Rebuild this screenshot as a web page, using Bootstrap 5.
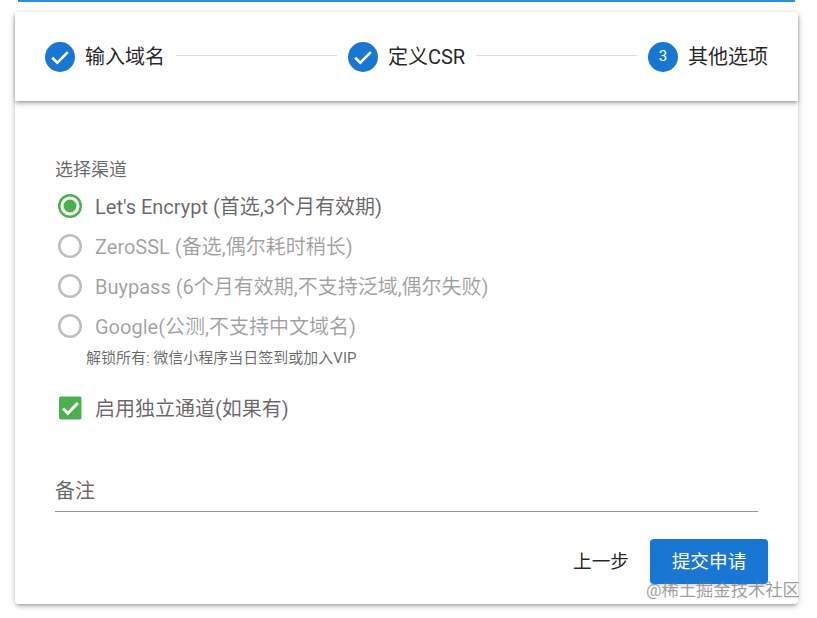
<!DOCTYPE html>
<html lang="zh">
<head>
<meta charset="utf-8">
<title>其他选项</title>
<link href="https://cdn.jsdelivr.net/npm/bootstrap@5.3.0/dist/css/bootstrap.min.css" rel="stylesheet">
<style>
html,body{height:618px;overflow:hidden;background:#fff;}
body{font-family:Roboto,"Noto Sans CJK SC",sans-serif;position:relative;}
.topline{height:2px;margin:0 22px 0 18px;background:#2f8fdc;}
.sheet{margin:10px 19px 0 15px;height:592px;border-radius:4px;background:#fff;box-shadow:0 3px 3px -2px rgba(0,0,0,.2),0 3px 4px 0 rgba(0,0,0,.14),0 1px 8px 0 rgba(0,0,0,.12);display:flex;flex-direction:column;}
.stepbar{height:89px;padding:0 30px;box-shadow:0 2px 4px -1px rgba(0,0,0,.4),0 4px 5px 0 rgba(0,0,0,.1);}
.dot{width:30px;height:30px;border-radius:50%;background:#1976d2;color:#fff;font-size:15px;font-weight:400;flex:none;}
.steplabel{font-size:20px;line-height:30px;color:rgba(0,0,0,.87);margin-left:10px;white-space:nowrap;}
.stepline{flex:1 1 0;height:1px;background:#dcdcdc;margin:-2px 11px 0;}
.formbody{padding:59px 40px 0;flex:1 1 auto;}
.grouplabel{font-size:18px;line-height:20px;color:rgba(0,0,0,.6);margin-bottom:6px;}
.optrow{height:40px;font-size:20px;color:rgba(0,0,0,.6);padding-left:3px;padding-top:1px;}
.optrow.off{color:rgba(0,0,0,.38);}
.optrow svg{flex:none;margin-right:13px;margin-top:-1px;}
.hint{font-size:15px;line-height:20px;color:rgba(0,0,0,.6);padding-left:31px;margin-top:2px;margin-bottom:20px;}
.remark{margin-top:43px;height:41px;border-bottom:1px solid #949494;font-size:20px;line-height:28px;color:rgba(0,0,0,.6);padding-top:6px;}
.actions{padding-top:27px;margin-right:-10px;}
.backbtn{font-size:18.67px;color:rgba(0,0,0,.87);padding:0;margin-right:21px;border:0;background:none;}
.subbtn{width:118px;height:45px;font-size:18.67px;background:#1976d2;border:0;color:#fff;padding:0;border-radius:4px;box-shadow:0 2px 3px rgba(0,0,0,.15);}
.wmark{position:absolute;left:646px;top:578px;font-size:17.3px;line-height:24px;color:rgba(120,120,120,.72);white-space:nowrap;}
</style>
</head>
<body>
<div class="topline"></div>
<div class="sheet">
  <div class="stepbar d-flex align-items-center">
    <div class="dot d-flex align-items-center justify-content-center"><svg width="22" height="22" viewBox="0 0 24 24"><path d="M3.5 12.8l5.6 5.4L20.5 6.6" fill="none" stroke="#fff" stroke-width="2.8"/></svg></div>
    <div class="steplabel">输入域名</div>
    <div class="stepline"></div>
    <div class="dot d-flex align-items-center justify-content-center"><svg width="22" height="22" viewBox="0 0 24 24"><path d="M3.5 12.8l5.6 5.4L20.5 6.6" fill="none" stroke="#fff" stroke-width="2.8"/></svg></div>
    <div class="steplabel">定义CSR</div>
    <div class="stepline"></div>
    <div class="dot d-flex align-items-center justify-content-center">3</div>
    <div class="steplabel">其他选项</div>
  </div>
  <div class="formbody">
    <div class="grouplabel">选择渠道</div>
    <div class="optrow d-flex align-items-center"><svg width="24" height="24" viewBox="0 0 24 24"><circle cx="12" cy="12" r="10.75" fill="none" stroke="#4caf50" stroke-width="2.5"/><circle cx="12" cy="12" r="6.5" fill="#4caf50"/></svg>Let's Encrypt (首选,3个月有效期)</div>
    <div class="optrow off d-flex align-items-center"><svg width="24" height="24" viewBox="0 0 24 24"><circle cx="12" cy="12" r="10.75" fill="none" stroke="#bdbdbd" stroke-width="2.5"/></svg>ZeroSSL (备选,偶尔耗时稍长)</div>
    <div class="optrow off d-flex align-items-center"><svg width="24" height="24" viewBox="0 0 24 24"><circle cx="12" cy="12" r="10.75" fill="none" stroke="#bdbdbd" stroke-width="2.5"/></svg>Buypass (6个月有效期,不支持泛域,偶尔失败)</div>
    <div class="optrow off d-flex align-items-center"><svg width="24" height="24" viewBox="0 0 24 24"><circle cx="12" cy="12" r="10.75" fill="none" stroke="#bdbdbd" stroke-width="2.5"/></svg>Google(公测,不支持中文域名)</div>
    <div class="hint">解锁所有: 微信小程序当日签到或加入VIP</div>
    <div class="optrow d-flex align-items-center"><svg width="24" height="24" viewBox="0 0 24 24"><rect x="1" y="0.5" width="22.5" height="23" rx="2" fill="#4caf50"/><path d="M5 12.5l4.8 4.8L19.8 7" fill="none" stroke="#fff" stroke-width="3"/></svg>启用独立通道(如果有)</div>
    <div class="remark">备注</div>
    <div class="actions d-flex justify-content-end align-items-center">
      <button type="button" class="btn backbtn">上一步</button>
      <button type="button" class="btn subbtn">提交申请</button>
    </div>
  </div>
</div>
<div class="wmark">@稀土掘金技术社区</div>
<script src="https://cdn.jsdelivr.net/npm/bootstrap@5.3.0/dist/js/bootstrap.bundle.min.js"></script>
</body>
</html>
